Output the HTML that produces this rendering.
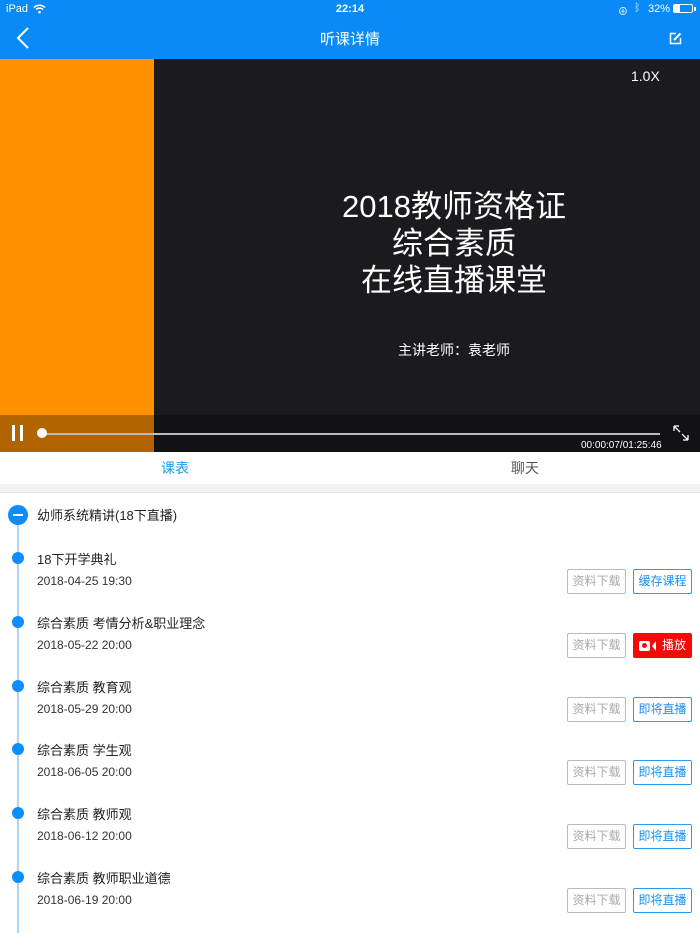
<!DOCTYPE html>
<html><head><meta charset="utf-8">
<style>
*{margin:0;padding:0;box-sizing:border-box}
body{width:700px;height:933px;overflow:hidden;background:#fff;font-family:"Liberation Sans","Noto Sans CJK SC",sans-serif;position:relative}
.abs{position:absolute}
.nav{left:0;top:0;width:700px;height:59px;background:#0a8af7;color:#fff}
.video{left:0;top:59px;width:700px;height:393px;background:#1b1b1f}
.orange{left:0;top:0;width:154px;height:393px;background:#ff9000}
.ctrl{left:0;top:356px;width:700px;height:37px;background:rgba(0,0,0,0.3)}
.tabs{left:0;top:452px;width:700px;height:32px;background:#fff}
.gray{left:0;top:484px;width:700px;height:9px;background:#f3f3f3;border-bottom:1px solid #e4e4e4}
.vline{left:17px;width:2px;background:#a9d5f7}
.dot{left:12px;width:12px;height:12px;border-radius:50%;background:#0d8df7}
.t{left:37px;font-size:13px;color:#222}
.d{left:37px;font-size:12px;color:#333}
.b1,.b2{height:25px;width:59px;font-size:12px;line-height:23px;text-align:center;border-radius:2px}
.b1{left:567px;border:1px solid #bbb;color:#aaa}
.b2{left:633px;border:1px solid #2a9af7;color:#1a8ff5}
</style></head><body>
<div class="abs nav">
  <div class="abs" style="left:6px;top:3px;font-size:11px">iPad</div>
  <svg class="abs" style="left:33px;top:4px" width="13" height="10" viewBox="0 0 13 10"><path d="M1 3.5a8 8 0 0 1 11 0M3 5.5a5 5 0 0 1 7 0" stroke="#fff" stroke-width="1.5" fill="none"/><circle cx="6.5" cy="8" r="1.3" fill="#fff"/></svg>
  <div class="abs" style="left:0;width:700px;top:3px;text-align:center;font-size:11px;font-weight:bold">22:14</div>
  <div class="abs" style="left:618px;top:3px;font-size:10px">⊕</div>
  <div class="abs" style="left:634px;top:2px;font-size:11px;color:#cfe6fd">ᛒ</div>
  <div class="abs" style="left:648px;top:3px;font-size:11px">32%</div>
  <div class="abs" style="left:673px;top:4px;width:20px;height:9px;border:1px solid #fff;border-radius:2px"><div style="width:6px;height:7px;background:#fff"></div></div>
  <div class="abs" style="left:694px;top:7px;width:2px;height:4px;background:#fff"></div>
  <svg class="abs" style="left:16px;top:27px" width="14" height="22" viewBox="0 0 14 22"><path d="M12 1L2 11l10 10" stroke="#fff" stroke-width="2" fill="none"/></svg>
  <div class="abs" style="left:0;width:700px;top:28px;text-align:center;font-size:15px">听课详情</div>
  <svg class="abs" style="left:669px;top:32px" width="13" height="13" viewBox="0 0 13 13"><path d="M7 1.5H1.5v10h10V6" stroke="#fff" stroke-width="1.5" fill="none"/><path d="M5 8l6.5-6.5" stroke="#fff" stroke-width="2"/></svg>
</div>
<div class="abs video">
  <div class="abs orange"></div>
  <div class="abs" style="left:631px;top:9px;color:#fff;font-size:14px">1.0X</div>
  <div class="abs" style="left:208px;width:492px;top:129px;text-align:center;color:#fff;font-size:31px;line-height:37px">2018教师资格证<br>综合素质<br>在线直播课堂</div>
  <div class="abs" style="left:208px;width:492px;top:281px;text-align:center;color:#fff;font-size:14px">主讲老师：袁老师</div>
  <div class="abs ctrl">
    <div class="abs" style="left:12px;top:10px;width:3px;height:16px;background:#fff"></div>
    <div class="abs" style="left:20px;top:10px;width:3px;height:16px;background:#fff"></div>
    <div class="abs" style="left:42px;top:18px;width:618px;height:2px;background:#bbb"></div>
    <div class="abs" style="left:37px;top:13px;width:10px;height:10px;border-radius:50%;background:#fff"></div>
    <div class="abs" style="left:581px;top:25px;color:#fff;font-size:10px">00:00:07/01:25:46</div>
    <svg class="abs" style="left:673px;top:10px" width="16" height="16" viewBox="0 0 16 16"><path d="M1 1l6 6M1 1v5M1 1h5M15 15l-6-6M15 15v-5M15 15h-5" stroke="#fff" stroke-width="1.3" fill="none"/></svg>
  </div>
</div>
<div class="abs tabs">
  <div class="abs" style="left:0;width:350px;top:6px;text-align:center;color:#1a9af7;font-size:14px">课表</div>
  <div class="abs" style="left:350px;width:350px;top:6px;text-align:center;color:#555;font-size:14px">聊天</div>
</div>
<div class="abs gray"></div>
<div class="abs vline" style="top:520px;height:413px"></div>
<div class="abs" style="left:8px;top:505px;width:20px;height:20px;border-radius:50%;background:#0d8df7"><div style="margin:9px 0 0 5px;width:10px;height:2px;background:#fff"></div></div>
<div class="abs t" style="top:505px">幼师系统精讲(18下直播)</div>

<div class="abs dot" style="top:552px"></div>
<div class="abs t" style="top:549px">18下开学典礼</div>
<div class="abs d" style="top:574px">2018-04-25 19:30</div>
<div class="abs b1" style="top:569px">资料下载</div>
<div class="abs b2" style="top:569px">缓存课程</div>

<div class="abs dot" style="top:616px"></div>
<div class="abs t" style="top:613px">综合素质 考情分析&amp;职业理念</div>
<div class="abs d" style="top:638px">2018-05-22 20:00</div>
<div class="abs b1" style="top:633px">资料下载</div>
<div class="abs b2" style="top:633px;background:#f50a0a;border-color:#f50a0a;color:#fff">
  <span style="display:inline-block;vertical-align:middle;width:11px;height:10px;background:#fff;border-radius:2px;position:relative;margin-right:2px"><span style="position:absolute;left:3px;top:2.5px;width:5px;height:5px;border-radius:50%;background:#f50a0a"></span></span><span style="display:inline-block;vertical-align:middle;width:0;height:0;border-top:5px solid transparent;border-bottom:5px solid transparent;border-right:4px solid #fff;margin-right:6px"></span>播放</div>

<div class="abs dot" style="top:680px"></div>
<div class="abs t" style="top:677px">综合素质 教育观</div>
<div class="abs d" style="top:702px">2018-05-29 20:00</div>
<div class="abs b1" style="top:697px">资料下载</div>
<div class="abs b2" style="top:697px">即将直播</div>

<div class="abs dot" style="top:743px"></div>
<div class="abs t" style="top:740px">综合素质 学生观</div>
<div class="abs d" style="top:765px">2018-06-05 20:00</div>
<div class="abs b1" style="top:760px">资料下载</div>
<div class="abs b2" style="top:760px">即将直播</div>

<div class="abs dot" style="top:807px"></div>
<div class="abs t" style="top:804px">综合素质 教师观</div>
<div class="abs d" style="top:829px">2018-06-12 20:00</div>
<div class="abs b1" style="top:824px">资料下载</div>
<div class="abs b2" style="top:824px">即将直播</div>

<div class="abs dot" style="top:871px"></div>
<div class="abs t" style="top:868px">综合素质 教师职业道德</div>
<div class="abs d" style="top:893px">2018-06-19 20:00</div>
<div class="abs b1" style="top:888px">资料下载</div>
<div class="abs b2" style="top:888px">即将直播</div>
</body></html>
